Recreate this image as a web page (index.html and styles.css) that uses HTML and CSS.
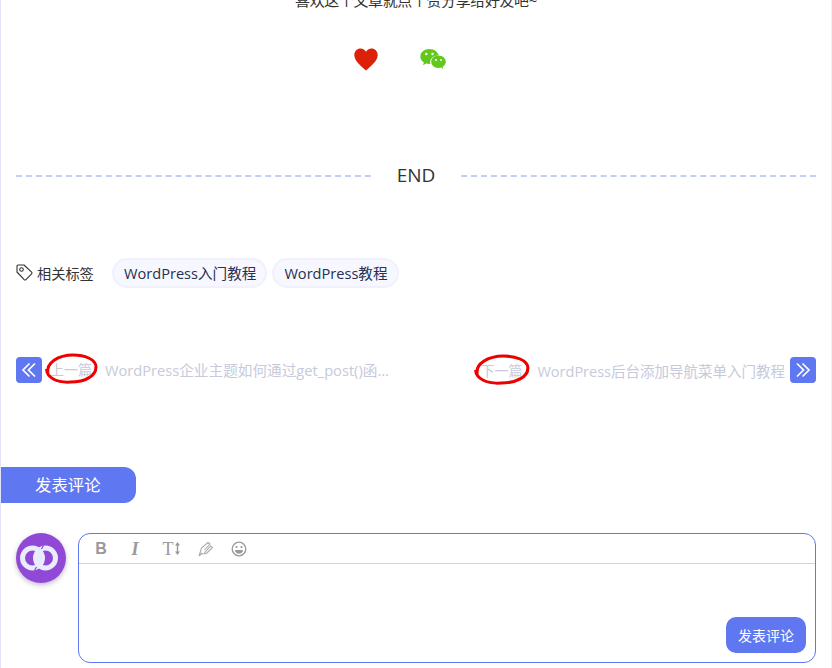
FILE: index.html
```html
<!DOCTYPE html>
<html lang="zh-CN">
<head>
<meta charset="utf-8">
<title>文章</title>
<link rel="stylesheet" href="styles.css">
</head>
<body>
<main class="page">
  <p class="share-text">喜欢这个文章就点个赞分享给好友吧~</p>
  <div class="share-icons">
    <svg class="heart" width="24" height="23" viewBox="0 0 24 23"><path d="M12 22.500C9.500 20 .3 13.800.3 7 .3 3 3.200.4 6.600.4 8.900.4 10.900 1.700 12 3.800 13.100 1.700 15.100.4 17.400.4 20.800.4 23.700 3 23.700 7 23.700 13.800 14.500 20 12 22.500Z" fill="#dd2108"/></svg>
    <svg class="wechat" width="26" height="21" viewBox="0 0 26 21">
      <path d="M9.500 0C4.300 0 .3 3.400.3 7.500c0 2.500 1.400 4.500 3.600 6l-.9 2.800 3.200-1.700c1.100.3 2.100.5 3.300.5h.9c-.2-.6-.3-1.200-.3-1.800 0-3.800 3.400-6.900 7.700-6.900h.9C17.800 2.800 14 0 9.500 0Z" fill="#62c91c"/>
      <path d="M25.800 12.800c0-3.400-3.400-6.200-7.300-6.200-4.100 0-7.300 2.800-7.300 6.200s3.200 6.200 7.300 6.200c.8 0 1.700-.2 2.500-.4l2.300 1.300-.6-2.100c1.900-1.300 3.100-3 3.100-5Z" fill="#62c91c"/>
      <circle cx="6.300" cy="5" r="1.200" fill="#fff"/><circle cx="12.500" cy="5" r="1.200" fill="#fff"/>
      <circle cx="16" cy="11" r="1" fill="#fff"/><circle cx="21" cy="11" r="1" fill="#fff"/>
    </svg>
  </div>
  <div class="divider"><span class="dash"></span><span class="end">END</span><span class="dash"></span></div>
  <div class="tags">
    <svg class="tag-icon" width="17" height="17" viewBox="0 0 17 17" fill="none" stroke="#333" stroke-width="1.100"><path d="M1 2.200C1 1.500 1.500 1 2.200 1H8l7.600 7.200c.5.500.5 1.200 0 1.700l-5.700 5.700c-.5.500-1.200.5-1.700 0L1 8Z" stroke-linejoin="round"/><circle cx="5.500" cy="5.500" r="1.800"/></svg>
    <span class="tags-label">相关标签</span>
    <a class="chip chip-first">WordPress入门教程</a>
    <a class="chip">WordPress教程</a>
  </div>
  <nav class="post-nav">
    <div class="nav-side">
      <span class="nav-btn"><svg width="16" height="16" viewBox="0 0 16 16" fill="none" stroke="#fff" stroke-width="1.700"><path d="M8.500 1.500 2 8 8.500 14.500M14 1.500 7.500 8 14 14.500"/></svg></span>
      <span class="nav-label nav-label-prev">上一篇<svg class="ring" width="54" height="34" viewBox="0 0 54 34" fill="none"><path d="M4 21C2 11 14 3 29 3c11 0 23 4 23 12 0 9-11 15-25 15C13 31 3 26 2.500 17" stroke="#ec0000" stroke-width="3"/></svg></span>
      <span class="nav-title">WordPress企业主题如何通过get_post()函...</span>
    </div>
    <div class="nav-side">
      <span class="nav-label nav-label-next">下一篇<svg class="ring ring-next" width="57" height="34" viewBox="0 0 54 34" fill="none" preserveAspectRatio="none"><path d="M4 21C2 11 14 3 29 3c11 0 23 4 23 12 0 9-11 15-25 15C13 31 3 26 2.500 17" stroke="#ec0000" stroke-width="3"/></svg></span>
      <span class="nav-title nav-title-next">WordPress后台添加导航菜单入门教程</span>
      <span class="nav-btn"><svg width="16" height="16" viewBox="0 0 16 16" fill="none" stroke="#fff" stroke-width="1.700"><path d="M2 1.500 8.500 8 2 14.500M7.500 1.500 14 8 7.500 14.500"/></svg></span>
    </div>
  </nav>
  <h2 class="comment-tab">发表评论</h2>
  <section class="comment">
    <div class="avatar">
      <svg width="50" height="50" viewBox="0 0 50 50" fill="none" stroke="#e9ecfb" stroke-width="5"><circle cx="16.500" cy="25" r="10"/><circle cx="29.500" cy="25" r="10"/><path d="M23 15.500a12.500 12.500 0 0 1 0 19 12.500 12.500 0 0 1 0-19Z" fill="#e9ecfb" stroke="none"/><path d="M27.500 12.500 25.500 16M18.500 37.500l2-3.500" stroke="#9049d6" stroke-width="1.200"/></svg>
    </div>
    <div class="editor">
      <div class="toolbar">
        <b class="tool tool-b">B</b>
        <i class="tool tool-i">I</i>
        <span class="tool tool-t">T</span>
        <svg class="tool-arrow" width="5" height="13" viewBox="0 0 5 13" fill="#999"><path d="M2.500 0 5 3.500H3.200v6H5L2.500 13 0 9.500h1.800v-6H0Z"/></svg>
        <svg class="tool-svg tool-pen" width="16" height="16" viewBox="0 0 16 16" fill="none" stroke="#aaa" stroke-width="1.100"><path d="M1 15 3.500 7 10 1.500 12 3 6.500 9M6 12.500 12.500 5 14.500 6.500 8.500 12.500 3.500 13M1 15l3-3"/></svg>
        <svg class="tool-svg tool-smile" width="16" height="16" viewBox="0 0 16 16" fill="none" stroke="#999" stroke-width="1.300"><circle cx="8" cy="8" r="6.800"/><circle cx="5.500" cy="6" r="1.100" fill="#999" stroke="none"/><circle cx="10.500" cy="6" r="1.100" fill="#999" stroke="none"/><path d="M4 9h8c0 2.500-2 3.800-4 3.800S4 11.500 4 9Z" fill="#999" stroke="none"/></svg>
      </div>
      <div class="editor-body"><button class="submit">发表评论</button></div>
    </div>
  </section>
</main>
</body>
</html>
```
FILE: styles.css
```css
* { box-sizing: border-box; }
html, body { margin: 0; height: 668px; overflow: hidden; background: #fff; }
body { font-family: "Open Sans", "Noto Sans CJK SC", sans-serif; color: #333; }
.page { width: 832px; height: 668px; overflow: hidden; padding: 0 15px; border-left: 1px solid #e3e3fb; border-right: 1px solid #eeeefc; }
.share-text { margin: -10px 0 0; height: 20px; line-height: 20px; font-size: 15px; letter-spacing: -.4px; text-align: center; color: #333; }
.share-icons { display: flex; justify-content: center; align-items: flex-start; gap: 42px; margin-top: 38px; height: 23px; padding-right: 33px; }
.wechat { margin-top: 1px; }
.divider { display: flex; align-items: center; margin-top: 92px; height: 24px; }
.dash { flex: 1; border-top: 2px dashed #c5cdf7; margin-top: 2px; }
.end { width: 90px; text-align: center; font-size: 19px; line-height: 24px; color: #333; }
.tags { display: flex; align-items: center; margin-top: 71px; height: 30px; font-size: 14.600px; }
.tag-icon { flex: none; margin-top: -2px; }
.tags-label { margin-left: 4px; width: 57px; color: #333; font-size: 14.200px; white-space: nowrap; }
.chip { display: block; height: 30px; line-height: 27px; padding: 0 9px 0 10px; border: 2px solid #f0f1fd; border-radius: 15px; background: #f7f7ff; color: #27304f; white-space: nowrap; }
.chip-first { margin-left: 18px; margin-right: 5px; }
.post-nav { display: flex; justify-content: space-between; margin-top: 69px; height: 26px; }
.nav-side { display: flex; align-items: center; line-height: 24px; }
.nav-btn { width: 26px; height: 26px; border-radius: 4px; background: #5f77f0; display: flex; align-items: center; justify-content: center; flex: none; }
.nav-label { position: relative; font-size: 14px; color: #c6cadb; white-space: nowrap; }
.nav-label-prev { margin: 0 13px 0 8px; }
.nav-label-next { margin: 2px 14px 0 0; }
.ring { position: absolute; left: -6px; top: -6px; }
.ring-next { left: -7px; }
.nav-title { font-size: 14.650px; color: #c6cadb; white-space: nowrap; }
.nav-title-next { font-size: 14.500px; margin: 3px 5px 0 1px; }
.comment-tab { margin: 84px 0 0 -15px; width: 135px; height: 36px; line-height: 36px; padding-left: 34px; font-size: 16.400px; font-weight: 400; color: #fff; background: #5f77f0; border-radius: 0 12px 12px 0; }
.comment { display: flex; gap: 12px; margin-top: 30px; }
.avatar { width: 50px; height: 50px; flex: none; border-radius: 50%; background: #9049d6; box-shadow: 0 2px 5px rgba(80, 60, 120, .35); }
.avatar svg { display: block; }
.editor { width: 738px; height: 130px; border: 1px solid #5f77f0; border-radius: 12px; display: flex; flex-direction: column; }
.toolbar { display: flex; align-items: center; height: 30px; padding-left: 16px; border-bottom: 1px solid #cdd0f5; color: #999; }
.tool { width: 12px; font-size: 16px; line-height: 20px; text-align: center; font-family: "Liberation Serif", serif; }
.tool-b { font-family: "Liberation Sans", sans-serif; font-weight: 700; font-size: 16px; }
.tool-i { margin-left: 22px; font-family: "Liberation Serif", serif; font-weight: 700; font-size: 18px; }
.tool-t { margin-left: 21px; font-size: 18px; }
.tool-arrow { margin-left: 1px; flex: none; }
.tool-pen { margin-left: 18px; }
.tool-smile { margin-left: 17px; }
.editor-body { flex: 1; display: flex; align-items: flex-end; justify-content: flex-end; padding: 0 9px 9px 0; }
.submit { width: 80px; height: 36px; border: 0; border-radius: 10px; background: #5f77f0; color: #fff; font: 14px "Open Sans", "Noto Sans CJK SC", sans-serif; padding: 0; }
```
